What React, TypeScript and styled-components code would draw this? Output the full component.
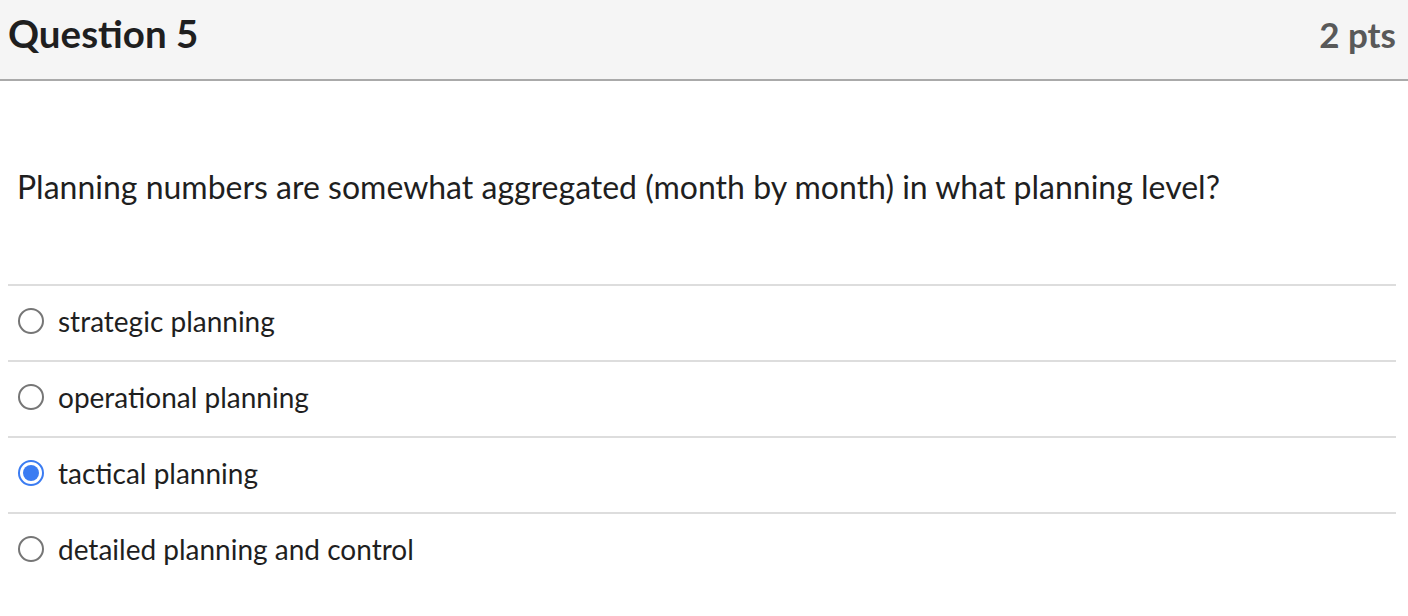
import React, { useState } from "react";
import styled, { createGlobalStyle } from "styled-components";

const Global = createGlobalStyle`
  html, body { margin: 0; padding: 0; background: #fff; }
  body { font-family: Lato, "Open Sans", "Liberation Sans", sans-serif; color: #2d3b45; }
`;

const Card = styled.div`
  width: 1408px;
  background: #fff;
`;

const Header = styled.div`
  height: 81px;
  box-sizing: border-box;
  background: #f5f5f5;
  border-bottom: 2px solid #aaaaaa;
  display: flex;
  align-items: center;
  justify-content: space-between;
  padding: 0 12px 13px 8px;
`;

const Title = styled.h2`
  margin: 0;
  font-size: 38.5px;
  font-weight: 700;
  color: #1f1f1f;
`;

const Points = styled.span`
  font-size: 35px;
  font-weight: 700;
  color: #595959;
  margin-top: 2px;
`;

const Body = styled.div`
  padding: 0 12px 0 8px;
`;

const QuestionText = styled.p`
  margin: 0;
  padding: 86px 0 0 9px;
  height: 203px;
  box-sizing: border-box;
  font-size: 32px;
  color: #1f1f1f;
`;

const Answers = styled.div`
  display: flex;
  flex-direction: column;
`;

const Answer = styled.label`
  display: flex;
  align-items: center;
  gap: 14px;
  height: 76px;
  box-sizing: border-box;
  border-top: 2px solid #dddddd;
  padding: 0 0 5px 10px;
  font-size: 28px;
  color: #1f1f1f;
  cursor: pointer;
`;

const Radio = styled.span<{ $checked: boolean }>`
  width: 26px;
  height: 26px;
  box-sizing: border-box;
  border-radius: 50%;
  border: 2px solid ${(p) => (p.$checked ? "#3b7cf2" : "#767676")};
  display: flex;
  align-items: center;
  justify-content: center;
  flex: none;
  &::after {
    content: "";
    width: 16px;
    height: 16px;
    border-radius: 50%;
    background: ${(p) => (p.$checked ? "#3b7cf2" : "transparent")};
  }
`;

const options = [
  "strategic planning",
  "operational planning",
  "tactical planning",
  "detailed planning and control",
];

export default function App() {
  const [sel, setSel] = useState(2);
  return (
    <Card>
      <Global />
      <Header>
        <Title>Question 5</Title>
        <Points>2 pts</Points>
      </Header>
      <Body>
        <QuestionText>
          Planning numbers are somewhat aggregated (month by month) in what planning level?
        </QuestionText>
        <Answers>
          {options.map((o, i) => (
            <Answer key={o} onClick={() => setSel(i)}>
              <Radio $checked={sel === i} />
              {o}
            </Answer>
          ))}
        </Answers>
      </Body>
    </Card>
  );
}
